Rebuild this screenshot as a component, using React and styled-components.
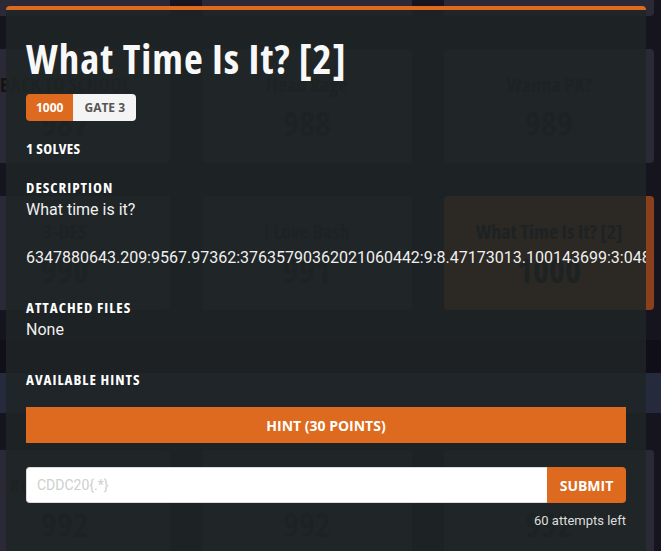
import React from "react";
import styled, { createGlobalStyle } from "styled-components";

const ORANGE = "#dd6a1f";
const HEAD = `"Open Sans", "DejaVu Sans Condensed", sans-serif`;
const BODY = `Roboto, "Liberation Sans", sans-serif`;

const GlobalStyle = createGlobalStyle`
  html, body { margin: 0; padding: 0; background: #16151f; overflow: hidden; }
  * { box-sizing: border-box; }
`;

const Page = styled.div`
  position: relative;
  width: 661px;
  height: 551px;
  overflow: hidden;
  background: #16151f;
  font-family: ${BODY};
`;

const Board = styled.div`
  display: flex;
  flex-direction: column;
  margin-top: -98px;
`;

const CardGrid = styled.div`
  display: grid;
  grid-template-columns: repeat(3, 210px);
  grid-auto-rows: 114px;
  gap: 33px 32px;
  margin-left: -40px;
  margin-top: ${(p) => p.$top || 0}px;
`;

const Card = styled.div`
  background: ${(p) => (p.$active ? "#8b401d" : "#2b2935")};
  border-radius: 4px;
  display: flex;
  flex-direction: column;
  align-items: center;
  padding-top: 24px;
  color: #141414;
`;

const CardTitle = styled.div`
  font: 700 20px/24px ${HEAD};
  font-stretch: 75%;
  white-space: nowrap;
`;

const CardPoints = styled.div`
  font: 700 34px/40px ${HEAD};
  font-stretch: 75%;
  margin-top: 6px;
`;

const Band = styled.div`
  margin-top: 30px;
  display: flex;
  flex-direction: column;
`;

const BandShade = styled.div`
  height: 33px;
  background: #100f19;
`;

const BandBar = styled.div`
  height: 40px;
  background: #262a3d;
`;

const Modal = styled.section`
  position: absolute;
  top: 6px;
  left: 6px;
  width: 640px;
  bottom: -20px;
  background: rgba(31, 36, 38, 0.88);
  border-top: 4px solid ${ORANGE};
  border-radius: 4px 4px 0 0;
  padding: 25px 20px 0;
  overflow: hidden;
  display: flex;
  flex-direction: column;
  align-items: stretch;
  color: #fff;
`;

const Title = styled.h2`
  margin: 0;
  font: 700 41px/46px ${HEAD};
  font-stretch: 75%;
  letter-spacing: 1px;
  color: #f8f8f8;
`;

const Badges = styled.div`
  display: flex;
  align-self: flex-start;
  margin-top: 13px;
  height: 27px;
  border-radius: 4px;
  overflow: hidden;
`;

const Badge = styled.span`
  display: flex;
  align-items: center;
  padding: 0 ${(p) => (p.$accent ? 10 : 11)}px;
  font: 700 12px ${HEAD};
  background: ${(p) => (p.$accent ? ORANGE : "#f4f4f4")};
  color: ${(p) => (p.$accent ? "#fff" : "#555")};
`;

const Solves = styled.div`
  margin-top: 18px;
  font: 700 15px/18px ${HEAD};
  font-stretch: 75%;
  letter-spacing: 0.3px;
  text-transform: uppercase;
`;

const Section = styled.div`
  margin-top: ${(p) => p.$gap}px;
`;

const Label = styled.h3`
  margin: 0;
  font: 700 15px/18px ${HEAD};
  font-stretch: 75%;
  letter-spacing: 1px;
  color: #fff;
  text-transform: uppercase;
`;

const Body = styled.div`
  margin-top: 2px;
  font: 400 16px/24px ${BODY};
  color: #f0f0f0;
  white-space: pre;
`;

const HintButton = styled.button`
  margin-top: 19px;
  height: 36px;
  width: 100%;
  border: none;
  border-radius: 0;
  background: ${ORANGE};
  color: #fff;
  font: 700 14px ${HEAD};
  text-transform: uppercase;
  cursor: pointer;
`;

const InputRow = styled.form`
  margin-top: 24px;
  display: flex;
  height: 36px;
`;

const FlagInput = styled.input`
  flex: 1;
  min-width: 0;
  height: 100%;
  border: 1px solid #dcdcdc;
  border-right: none;
  border-radius: 4px 0 0 4px;
  padding: 0 10px;
  background: #fff;
  font: 400 14px ${BODY};
  color: #333;
  &::placeholder { color: #cfcfcf; }
  &:focus { outline: none; }
`;

const SubmitButton = styled.button`
  width: 79px;
  height: 100%;
  border: none;
  border-radius: 0 4px 4px 0;
  background: ${ORANGE};
  color: #fff;
  font: 700 14px ${HEAD};
  text-transform: uppercase;
  cursor: pointer;
`;

const Attempts = styled.div`
  margin-top: 8px;
  text-align: right;
  font: 400 13px/20px ${BODY};
  color: #dedede;
`;

const topCards = [
  { t: "Warm Up", p: 984 },
  { t: "Baby Steps", p: 985 },
  { t: "Gatekeeper", p: 986 },
  { t: "BACK TO SCHOOL", p: 987 },
  { t: "Head Rage", p: 988 },
  { t: "Wanna PK?", p: 989 },
  { t: "3-DES", p: 990 },
  { t: "I Love Bash", p: 991 },
  { t: "What Time Is It? [2]", p: 1000, active: true },
];

const bottomCards = [
  { t: "Keep It Simple", p: 992 },
  { t: "Broken Pipe", p: 992 },
  { t: "Lost Signal", p: 992 },
];

const DESCRIPTION =
  "What time is it?\n\n6347880643.209:9567.97362:37635790362021060442:9:8.47173013.100143699:3:0482617.55:1120";

export default function App() {
  return (
    <Page>
      <GlobalStyle />
      <Board>
        <CardGrid>
          {topCards.map((c) => (
            <Card key={c.t} $active={c.active}>
              <CardTitle>{c.t}</CardTitle>
              <CardPoints>{c.p}</CardPoints>
            </Card>
          ))}
        </CardGrid>
        <Band>
          <BandShade />
          <BandBar />
        </Band>
        <CardGrid $top={37}>
          {bottomCards.map((c) => (
            <Card key={c.t}>
              <CardTitle>{c.t}</CardTitle>
              <CardPoints>{c.p}</CardPoints>
            </Card>
          ))}
        </CardGrid>
      </Board>

      <Modal>
        <Title>What Time Is It? [2]</Title>
        <Badges>
          <Badge $accent>1000</Badge>
          <Badge>GATE 3</Badge>
        </Badges>
        <Solves>1 Solves</Solves>
        <Section $gap={21}>
          <Label>Description</Label>
          <Body>{DESCRIPTION}</Body>
        </Section>
        <Section $gap={28}>
          <Label>Attached Files</Label>
          <Body>None</Body>
        </Section>
        <Section $gap={28}>
          <Label>Available Hints</Label>
        </Section>
        <HintButton type="button">Hint (30 points)</HintButton>
        <InputRow onSubmit={(e) => e.preventDefault()}>
          <FlagInput placeholder="CDDC20{.*}" />
          <SubmitButton type="submit">Submit</SubmitButton>
        </InputRow>
        <Attempts>60 attempts left</Attempts>
      </Modal>
    </Page>
  );
}
